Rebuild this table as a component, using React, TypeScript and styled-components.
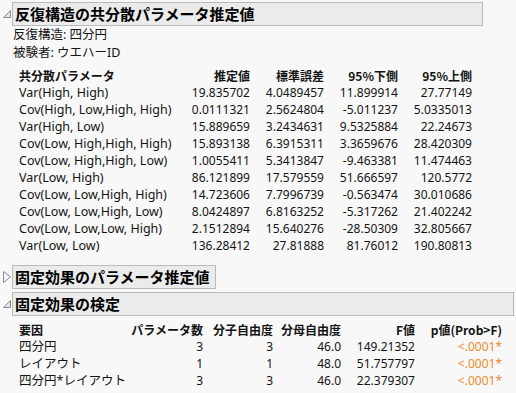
import React from "react";
import styled, { createGlobalStyle } from "styled-components";

const Global = createGlobalStyle`
  html, body { margin: 0; padding: 0; background: #f8f8f8; }
  body {
    font-family: "Noto Sans", "Noto Sans CJK JP", sans-serif;
    font-size: 12px;
    color: #141414;
  }
`;

const Page = styled.div`
  display: flex;
  flex-direction: column;
  padding: 2px 0 0 2px;
  width: 514px;
  box-sizing: border-box;
`;

const OutlineHead = styled.div<{ $gap?: number }>`
  display: flex;
  align-items: center;
  margin-top: ${(p) => p.$gap ?? 0}px;
`;

const Toggle = styled.div`
  width: 10px;
  height: 24px;
  display: flex;
  align-items: center;
  justify-content: flex-start;
`;

const TitleBar = styled.div<{ $width?: number }>`
  box-sizing: border-box;
  height: 24px;
  width: ${(p) => (p.$width ? `${p.$width}px` : "auto")};
  background: #ebebeb;
  border: 1px solid #bababa;
  font-family: "Noto Sans CJK JP", sans-serif;
  font-weight: 700;
  font-size: 15px;
  line-height: 22px;
  padding: 0 5px 0 2px;
  white-space: nowrap;
  color: #000;
`;

const Body = styled.div`
  padding-left: 10px;
  display: flex;
  flex-direction: column;
`;

const InfoLine = styled.div`
  line-height: 18px;
  font-size: 12.5px;
  padding-left: 1px;
  white-space: nowrap;
`;

const Table = styled.div<{ $cols: string; $mt: number }>`
  display: grid;
  grid-template-columns: ${(p) => p.$cols};
  margin-top: ${(p) => p.$mt}px;
  padding-left: 7px;
`;

const Cell = styled.div<{ $head?: boolean; $left?: boolean; $sig?: boolean }>`
  line-height: 17px;
  height: 17px;
  white-space: nowrap;
  font-size: ${(p) => (p.$left && !p.$head ? "12.5px" : "12px")};
  text-align: ${(p) => (p.$left ? "left" : "right")};
  font-weight: ${(p) => (p.$head ? 700 : 400)};
  color: ${(p) => (p.$sig ? "#ec8a2c" : "inherit")};
  font-family: ${(p) =>
    p.$head ? `"Noto Sans CJK JP", "Noto Sans", sans-serif` : "inherit"};
`;

const OpenTri = () => (
  <svg width="10" height="10" viewBox="0 0 10 10">
    <polygon points="8.5,1.5 8.5,8.5 1.5,8.5" fill="#e4e4e4" stroke="#8a8a8a" strokeWidth="1" />
  </svg>
);

const ClosedTri = () => (
  <svg width="10" height="14" viewBox="0 0 10 14">
    <polygon points="1.5,1.5 8.5,7 1.5,12.5" fill="#f4f4f4" stroke="#8a8a8a" strokeWidth="1" />
  </svg>
);

const covRows: string[][] = [
  ["Var(High, High)", "19.835702", "4.0489457", "11.899914", "27.77149"],
  ["Cov(High, Low,High, High)", "0.0111321", "2.5624804", "-5.011237", "5.0335013"],
  ["Var(High, Low)", "15.889659", "3.2434631", "9.5325884", "22.24673"],
  ["Cov(Low, High,High, High)", "15.893138", "6.3915311", "3.3659676", "28.420309"],
  ["Cov(Low, High,High, Low)", "1.0055411", "5.3413847", "-9.463381", "11.474463"],
  ["Var(Low, High)", "86.121899", "17.579559", "51.666597", "120.5772"],
  ["Cov(Low, Low,High, High)", "14.723606", "7.7996739", "-0.563474", "30.010686"],
  ["Cov(Low, Low,High, Low)", "8.0424897", "6.8163252", "-5.317262", "21.402242"],
  ["Cov(Low, Low,Low, High)", "2.1512894", "15.640276", "-28.50309", "32.805667"],
  ["Var(Low, Low)", "136.28412", "27.81888", "81.76012", "190.80813"],
];

const covHead = ["共分散パラメータ", "推定値", "標準誤差", "95%下側", "95%上側"];

const testHead = ["要因", "パラメータ数", "分子自由度", "分母自由度", "F値", "p値(Prob>F)"];
const testRows: string[][] = [
  ["四分円", "3", "3", "46.0", "149.21352", "<.0001*"],
  ["レイアウト", "1", "1", "48.0", "51.757797", "<.0001*"],
  ["四分円*レイアウト", "3", "3", "46.0", "22.379307", "<.0001*"],
];

export default function App() {
  return (
    <Page>
      <Global />
      <OutlineHead>
        <Toggle>
          <OpenTri />
        </Toggle>
        <TitleBar $width={471}>反復構造の共分散パラメータ推定値</TitleBar>
      </OutlineHead>
      <Body>
        <InfoLine>反復構造: 四分円</InfoLine>
        <InfoLine>被験者: ウエハーID</InfoLine>
        <Table $cols="160px 71px 74px 74px 74px" $mt={5}>
          {covHead.map((h, i) => (
            <Cell key={h} $head $left={i === 0}>
              {h}
            </Cell>
          ))}
          {covRows.map((r) =>
            r.map((v, i) => (
              <Cell key={r[0] + i} $left={i === 0}>
                {v}
              </Cell>
            ))
          )}
        </Table>
      </Body>
      <OutlineHead $gap={11}>
        <Toggle>
          <ClosedTri />
        </Toggle>
        <TitleBar>固定効果のパラメータ推定値</TitleBar>
      </OutlineHead>
      <OutlineHead $gap={3}>
        <Toggle>
          <OpenTri />
        </Toggle>
        <TitleBar $width={502}>固定効果の検定</TitleBar>
      </OutlineHead>
      <Body>
        <Table $cols="104px 80px 70px 68px 74px 87px" $mt={5}>
          {testHead.map((h, i) => (
            <Cell key={h} $head $left={i === 0}>
              {h}
            </Cell>
          ))}
          {testRows.map((r) =>
            r.map((v, i) => (
              <Cell key={r[0] + i} $left={i === 0} $sig={i === 5}>
                {v}
              </Cell>
            ))
          )}
        </Table>
      </Body>
    </Page>
  );
}
